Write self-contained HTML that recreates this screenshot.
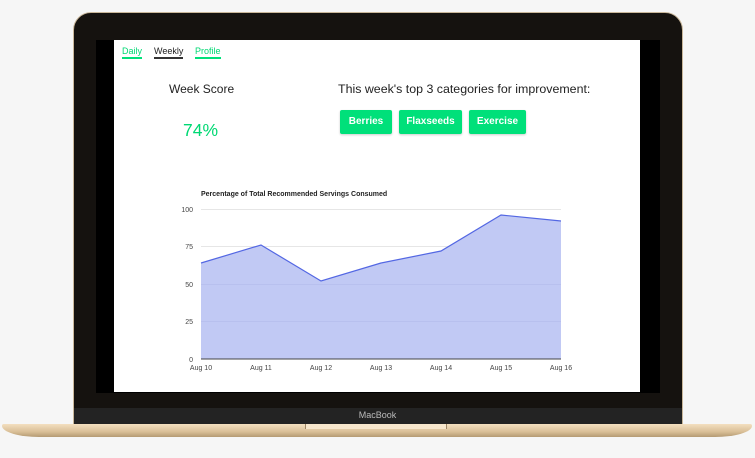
<!DOCTYPE html>
<html><head><style>
body{margin:0;width:755px;height:458px;background:#f6f6f6;position:relative;overflow:hidden;font-family:"Liberation Sans",sans-serif}
.abs{position:absolute}
.nav{font-size:9px;top:46px}
.btn{position:absolute;top:110px;height:24px;background:#00e07a;color:#fff;font-size:10px;font-weight:bold;line-height:24px;text-align:center;border-radius:2px;box-shadow:0 1px 2px rgba(0,0,0,.2)}
</style></head><body>
<div class="abs" style="left:73px;top:12px;width:610px;height:414px;background:#15120f;border-radius:18px 18px 0 0;border:1px solid #c9b79a;box-sizing:border-box"></div>
<div class="abs" style="left:74px;top:408px;width:608px;height:16px;background:#232323"></div>
<div class="abs" style="left:96px;top:40px;width:564px;height:353px;background:#000"></div>
<div class="abs" style="left:114px;top:40px;width:526px;height:352px;background:#fff"></div>
<div class="abs" style="left:0;top:410px;width:755px;text-align:center;color:#bbb;font-size:9px">MacBook</div>
<div class="abs" style="left:2px;top:424px;width:750px;height:13px;background:linear-gradient(#f3dfc0,#d9bf97 60%,#b49a73);border-radius:2px 2px 40px 40px/2px 2px 12px 12px"></div>
<div class="abs" style="left:305px;top:424px;width:140px;height:5px;background:#f7e6cc;border-left:1px solid #9c8565;border-right:1px solid #9c8565"></div>

<div class="abs nav" style="left:122px;color:#00d873;border-bottom:2px solid #00e07a;line-height:11px">Daily</div>
<div class="abs nav" style="left:154px;color:#222;border-bottom:2px solid #333;line-height:11px">Weekly</div>
<div class="abs nav" style="left:195px;color:#00d873;border-bottom:2px solid #00e07a;line-height:11px">Profile</div>

<div class="abs" style="left:169px;top:82px;font-size:12px;color:#222">Week Score</div>
<div class="abs" style="left:183px;top:120px;font-size:17.5px;color:#00d873">74%</div>
<div class="abs" style="left:338px;top:82px;font-size:12.4px;color:#222">This week's top 3 categories for improvement:</div>
<div class="btn" style="left:340px;width:52px">Berries</div>
<div class="btn" style="left:399px;width:63px">Flaxseeds</div>
<div class="btn" style="left:469px;width:57px">Exercise</div>

<svg class="abs" style="left:0;top:0" width="755" height="458" font-family="Liberation Sans,sans-serif">
<text x="201" y="196" font-size="7" font-weight="bold" fill="#222">Percentage of Total Recommended Servings Consumed</text>
<g stroke="#e6e6e6" stroke-width="1">
<line x1="201" y1="209.5" x2="561" y2="209.5"/><line x1="201" y1="246.5" x2="561" y2="246.5"/><line x1="201" y1="284.5" x2="561" y2="284.5"/><line x1="201" y1="321.5" x2="561" y2="321.5"/>
</g>
<polygon points="201,359 201,263 261,245 321,281 381,263 441,251 501,215 561,221 561,359" fill="#c1c9f4"/>
<polyline points="201,263 261,245 321,281 381,263 441,251 501,215 561,221" fill="none" stroke="#5367e3" stroke-width="1.2"/>
<g stroke="#b0b8e8" stroke-width="0.6"><line x1="201" y1="284.5" x2="561" y2="284.5"/><line x1="201" y1="321.5" x2="561" y2="321.5"/></g>
<line x1="201" y1="359" x2="561" y2="359" stroke="#444"/>
<g font-size="7" fill="#444" text-anchor="end">
<text x="193" y="212">100</text><text x="193" y="249">75</text><text x="193" y="287">50</text><text x="193" y="324">25</text><text x="193" y="362">0</text>
</g>
<g font-size="7" fill="#444" text-anchor="middle">
<text x="201" y="370">Aug 10</text><text x="261" y="370">Aug 11</text><text x="321" y="370">Aug 12</text><text x="381" y="370">Aug 13</text><text x="441" y="370">Aug 14</text><text x="501" y="370">Aug 15</text><text x="561" y="370">Aug 16</text>
</g>
</svg>
</body></html>
